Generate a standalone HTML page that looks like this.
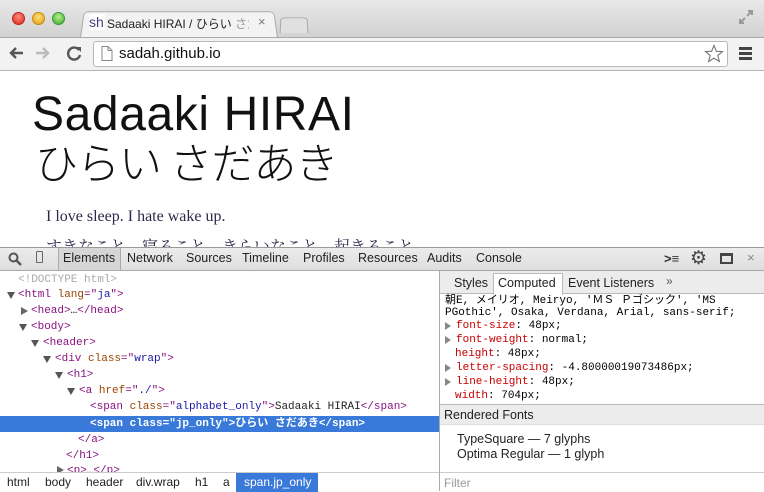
<!DOCTYPE html>
<html><head><style>
*{margin:0;padding:0;box-sizing:border-box}
body{width:764px;height:491px;overflow:hidden;background:#fff;font-family:"Liberation Sans","Noto Sans CJK JP",sans-serif;position:relative}
.abs{position:absolute}
.mono{font-family:"Liberation Mono","Noto Sans CJK JP",monospace;font-size:11px;white-space:pre}
.tag{color:#881280}.an{color:#994500}.av{color:#1a1aa6}
.row{position:absolute;height:16px;line-height:16px}
.tri{position:absolute;width:0;height:0;border-left:4px solid transparent;border-right:4px solid transparent;border-top:7px solid #555}
.trr{position:absolute;width:0;height:0;border-top:4px solid transparent;border-bottom:4px solid transparent;border-left:7px solid #666}
.dt{position:absolute;top:251px;font-size:12.5px;color:#222}
.cp{position:absolute;left:5px;height:14px;line-height:14px}
.cp .n{color:#c80000}
.trs{position:absolute;left:5px;width:0;height:0;border-top:4px solid transparent;border-bottom:4px solid transparent;border-left:6px solid #888}
</style></head><body>
<!-- tab bar -->
<div class="abs" style="left:0;top:0;width:764px;height:37px;background:linear-gradient(#e8e8e8,#d2d2d2)"></div>
<div class="abs" style="left:12px;top:12px;width:13px;height:13px;border-radius:50%;background:radial-gradient(circle at 50% 35%,#ff8a7a,#d8261c);border:1px solid #b22"></div>
<div class="abs" style="left:32px;top:12px;width:13px;height:13px;border-radius:50%;background:radial-gradient(circle at 50% 35%,#ffe07a,#e09a10);border:1px solid #c80"></div>
<div class="abs" style="left:52px;top:12px;width:13px;height:13px;border-radius:50%;background:radial-gradient(circle at 50% 35%,#b8f08a,#3aa52a);border:1px solid #393"></div>
<div class="abs" style="left:80px;top:10px;width:198px;height:28px;background:#f3f3f3;border:1px solid #aaa;border-bottom:none;border-radius:5px 5px 0 0;transform:perspective(100px) rotateX(8deg);transform-origin:bottom"></div>
<div class="abs" style="left:89px;top:14px;width:16px;height:16px;background:#fff;color:#4a3b7a;font-size:14px;line-height:16px">sh</div>
<div class="abs" style="left:107px;top:15px;font-size:12px;color:#222;width:142px;overflow:hidden;white-space:nowrap">Sadaaki HIRAI / ひらい <span style="color:#999">さだ</span></div>
<div class="abs" style="left:258px;top:14px;font-size:13px;color:#777">×</div>
<div class="abs" style="left:280px;top:17px;width:28px;height:16px;border:1px solid #aaa;border-bottom:none;border-radius:4px 4px 0 0;background:#e0e0e0;transform:perspective(50px) rotateX(10deg)"></div>
<svg class="abs" style="left:738px;top:9px" width="16" height="16"><path d="M9 7L14 2M10 2H14V6M7 9L2 14M2 10V14H6" stroke="#999" stroke-width="2" fill="none"/></svg>
<!-- toolbar -->
<div class="abs" style="left:0;top:37px;width:764px;height:34px;background:#f2f2f2;border-top:1px solid #aaa;border-bottom:1px solid #b5b5b5"></div>
<svg class="abs" style="left:8px;top:45px" width="80" height="16"><path d="M15 8H3M8 3L3 8L8 13" stroke="#555" stroke-width="2.4" fill="none"/><path d="M28 8H40M35 3L40 8L35 13" stroke="#bbb" stroke-width="2.4" fill="none"/><path d="M71 5A6 6 0 1 0 72 10" stroke="#555" stroke-width="2.4" fill="none"/><path d="M68 2L73 2L73 7Z" fill="#555"/></svg>
<div class="abs" style="left:93px;top:41px;width:635px;height:26px;background:#fff;border:1px solid #b8b8b8;border-radius:3px"></div>
<svg class="abs" style="left:101px;top:46px" width="12" height="15"><path d="M1 .5H7L11 4.5V14.5H1Z" fill="#fff" stroke="#888"/><path d="M7 .5V4.5H11" fill="none" stroke="#888"/></svg>
<div class="abs" style="left:119px;top:45px;font-size:15px;color:#111">sadah.github.io</div>
<svg class="abs" style="left:704px;top:44px" width="20" height="20"><path d="M10 1.5L12.4 7.3L18.5 7.6L13.8 11.5L15.4 17.5L10 14.1L4.6 17.5L6.2 11.5L1.5 7.6L7.6 7.3Z" fill="#fff" stroke="#777" stroke-width="1.1"/></svg>
<div class="abs" style="left:739px;top:47px;width:13px;height:3px;background:#444;box-shadow:0 5px 0 #444,0 10px 0 #444"></div>
<!-- page -->
<div class="abs" style="left:32px;top:89px;font-size:48px;line-height:52px;color:#111;letter-spacing:0.6px">Sadaaki HIRAI</div>
<div class="abs" style="left:35px;top:136px;font-size:43px;line-height:50px;color:#111;font-family:'Noto Sans CJK JP',sans-serif;font-weight:300;letter-spacing:-1px">ひらい さだあき</div>
<div class="abs" style="left:46px;top:208px;font-family:'Liberation Serif','Noto Serif CJK SC',serif;font-size:16px;color:#2a2a4a">I love sleep. I hate wake up.</div>
<div class="abs" style="left:46px;top:234px;font-family:'Liberation Serif','Noto Serif CJK SC',serif;font-size:16px;color:#2a2a4a">すきなこと、寝ること。きらいなこと、起きること。</div>
<!-- devtools toolbar -->
<div class="abs" style="left:0;top:247px;width:764px;height:24px;background:linear-gradient(#ececec,#dedede);border-top:1px solid #999;border-bottom:1px solid #aaa"></div>
<svg class="abs" style="left:8px;top:252px" width="14" height="14"><circle cx="5.5" cy="5.5" r="4" stroke="#555" stroke-width="2" fill="none"/><path d="M8.5 8.5L13 13" stroke="#555" stroke-width="2.4"/></svg>
<div class="abs" style="left:36px;top:251px;width:7px;height:12px;border:1px solid #666;border-radius:1px"></div>
<div class="abs" style="left:58px;top:248px;width:63px;height:22px;background:#d6d6d6;border-left:1px solid #aaa;border-right:1px solid #aaa"></div>
<div class="dt" style="left:63px">Elements</div>
<div class="dt" style="left:127px">Network</div>
<div class="dt" style="left:186px">Sources</div>
<div class="dt" style="left:242px">Timeline</div>
<div class="dt" style="left:303px">Profiles</div>
<div class="dt" style="left:358px">Resources</div>
<div class="dt" style="left:427px">Audits</div>
<div class="dt" style="left:476px">Console</div>
<div class="abs" style="left:664px;top:251px;font-size:13px;color:#333;font-weight:bold">&gt;≡</div>
<div class="abs" style="left:690px;top:247px;font-size:19px;color:#444">⚙</div>
<div class="abs" style="left:720px;top:253px;width:13px;height:11px;border:2px solid #444;border-top-width:3px"></div>
<div class="abs" style="left:747px;top:250px;font-size:13px;color:#888">×</div>
<!-- elements pane -->
<div class="abs" style="left:439px;top:271px;width:1px;height:220px;background:#aaa"></div>
<div class="abs mono" style="left:0;top:272px;width:439px;height:200px;font-size:11px;overflow:hidden">
<div class="row" style="left:18px;top:0px;color:#aaa">&lt;!DOCTYPE html&gt;</div>
<div class="tri" style="left:7px;top:20px"></div><div class="row" style="left:18px;top:15px"><span class="tag">&lt;html </span><span class="an">lang</span><span class="tag">="</span><span class="av">ja</span><span class="tag">"&gt;</span></div>
<div class="trr" style="left:21px;top:35px"></div><div class="row" style="left:31px;top:31px"><span class="tag">&lt;head&gt;</span>…<span class="tag">&lt;/head&gt;</span></div>
<div class="tri" style="left:19px;top:52px"></div><div class="row" style="left:31px;top:47px"><span class="tag">&lt;body&gt;</span></div>
<div class="tri" style="left:31px;top:68px"></div><div class="row" style="left:43px;top:63px"><span class="tag">&lt;header&gt;</span></div>
<div class="tri" style="left:43px;top:84px"></div><div class="row" style="left:55px;top:79px"><span class="tag">&lt;div </span><span class="an">class</span><span class="tag">="</span><span class="av">wrap</span><span class="tag">"&gt;</span></div>
<div class="tri" style="left:55px;top:100px"></div><div class="row" style="left:67px;top:95px"><span class="tag">&lt;h1&gt;</span></div>
<div class="tri" style="left:67px;top:116px"></div><div class="row" style="left:79px;top:111px"><span class="tag">&lt;a </span><span class="an">href</span><span class="tag">="</span><span class="av">./</span><span class="tag">"&gt;</span></div>
<div class="row" style="left:90px;top:127px"><span class="tag">&lt;span </span><span class="an">class</span><span class="tag">="</span><span class="av">alphabet_only</span><span class="tag">"&gt;</span><span style="color:#222">Sadaaki HIRAI</span><span class="tag">&lt;/span&gt;</span></div>
<div class="row" style="left:0;top:144px;width:439px;background:#3879d9"></div>
<div class="row" style="left:90px;top:144px;color:#fff;font-weight:bold">&lt;span class="jp_only"&gt;ひらい さだあき&lt;/span&gt;</div>
<div class="row" style="left:78px;top:160px"><span class="tag">&lt;/a&gt;</span></div>
<div class="row" style="left:66px;top:176px"><span class="tag">&lt;/h1&gt;</span></div>
<div class="trr" style="left:57px;top:194px"></div><div class="row" style="left:67px;top:191px"><span class="tag">&lt;p&gt;…&lt;/p&gt;</span></div>
</div>
<!-- breadcrumbs -->
<div class="abs" style="left:0;top:472px;width:439px;height:19px;background:#fff;border-top:1px solid #ccc;font-size:12px;color:#222;line-height:19px;white-space:nowrap">
<span class="abs" style="left:7px">html</span><span class="abs" style="left:45px">body</span><span class="abs" style="left:86px">header</span><span class="abs" style="left:136px">div.wrap</span><span class="abs" style="left:195px">h1</span><span class="abs" style="left:223px">a</span>
<span class="abs" style="left:236px;top:0;width:82px;height:19px;background:#3879d9;color:#fff;padding-left:8px">span.jp_only</span></div>
<!-- right pane -->
<div class="abs" style="left:440px;top:271px;width:324px;height:23px;background:#ececec;border-bottom:1px solid #bbb"></div>
<div class="abs" style="left:493px;top:273px;width:70px;height:22px;background:#fff;border:1px solid #bbb;border-bottom:none"></div>
<div class="abs" style="left:454px;top:276px;font-size:12.5px;color:#222">Styles</div>
<div class="abs" style="left:498px;top:276px;font-size:12.5px;color:#222">Computed</div>
<div class="abs" style="left:568px;top:276px;font-size:12.5px;color:#222">Event Listeners</div>
<div class="abs" style="left:666px;top:274px;font-size:12px;color:#555">»</div>
<div class="abs mono" style="left:440px;top:294px;width:324px;height:110px">
<div class="cp" style="top:0">朝E, メイリオ, Meiryo, 'ＭＳ Ｐゴシック', 'MS</div>
<div class="cp" style="top:12px">PGothic', Osaka, Verdana, Arial, sans-serif;</div>
<div class="trs" style="top:28px"></div><div class="cp" style="left:16px;top:25px"><span class="n">font-size</span>: 48px;</div>
<div class="trs" style="top:42px"></div><div class="cp" style="left:16px;top:39px"><span class="n">font-weight</span>: normal;</div>
<div class="cp" style="left:15px;top:53px"><span class="n">height</span>: 48px;</div>
<div class="trs" style="top:70px"></div><div class="cp" style="left:16px;top:67px"><span class="n">letter-spacing</span>: -4.80000019073486px;</div>
<div class="trs" style="top:84px"></div><div class="cp" style="left:16px;top:81px"><span class="n">line-height</span>: 48px;</div>
<div class="cp" style="left:15px;top:95px"><span class="n">width</span>: 704px;</div>
</div>
<div class="abs" style="left:440px;top:404px;width:324px;height:21px;background:#ececec;border-top:1px solid #bbb;border-bottom:1px solid #ddd;font-size:12.5px;color:#222;padding:3px 0 0 4px">Rendered Fonts</div>
<div class="abs" style="left:457px;top:432px;font-size:12.5px;color:#222;line-height:15px">TypeSquare — 7 glyphs<br>Optima Regular — 1 glyph</div>
<div class="abs" style="left:440px;top:472px;width:324px;height:19px;border-top:1px solid #ccc;font-size:12px;color:#999;padding:3px 0 0 4px">Filter</div>
</body></html>
